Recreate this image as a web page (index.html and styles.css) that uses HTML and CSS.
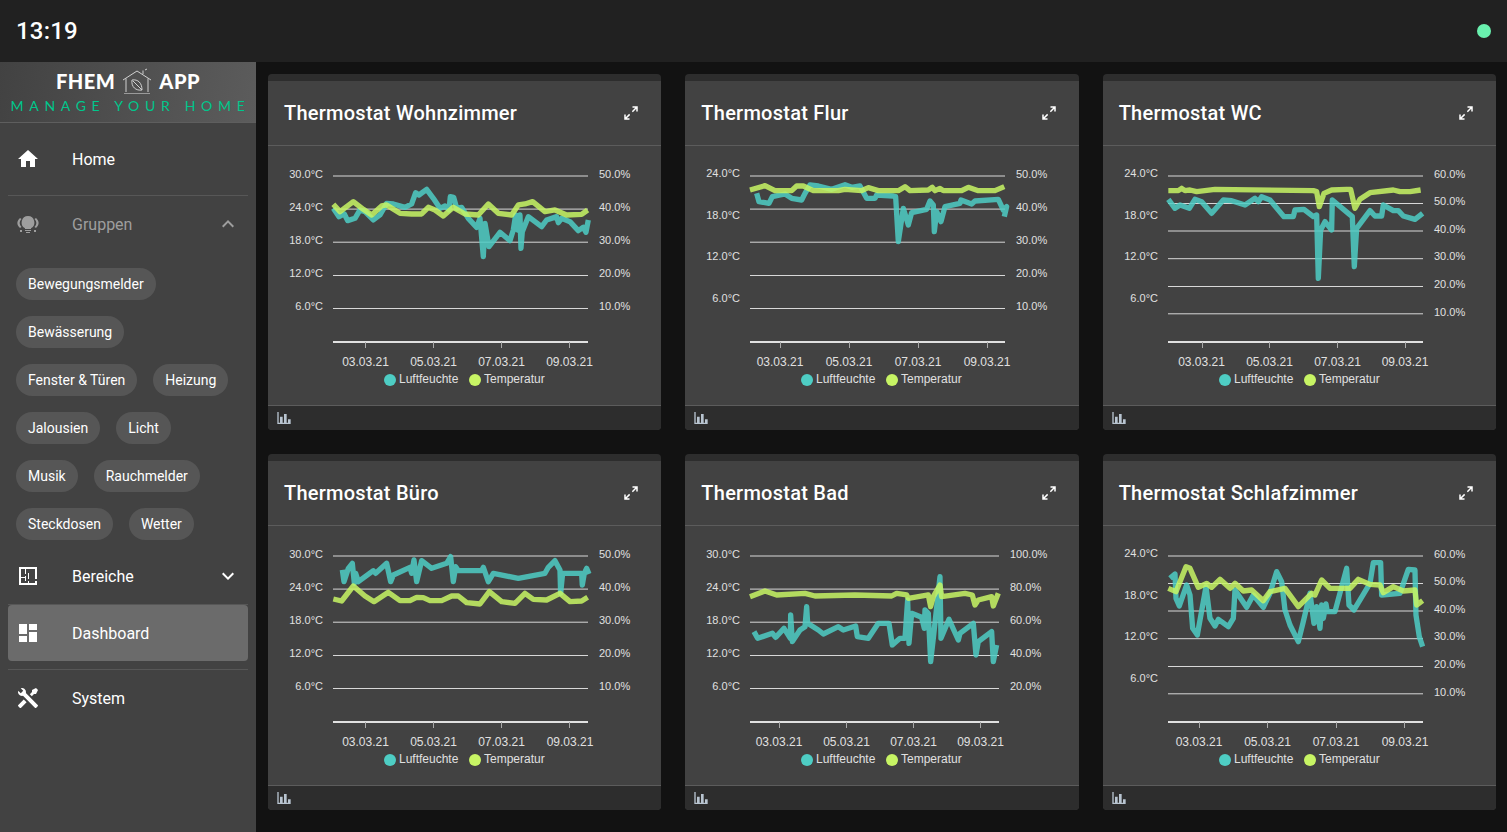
FILE: index.html
```html
<!DOCTYPE html>
<html lang="en">
<head>
    <meta charset="UTF-8">
    <meta name="viewport" content="width=device-width, initial-scale=1.0">
    <title>FHEM App</title>
    <link rel="stylesheet" href="styles.css">
</head>
<body>
    <header class="topbar">
        <span class="clock">13:19</span>
        <span class="status-dot"></span>
    </header>
    <div class="layout">
        <aside class="sidebar">
            <div class="logo">
                <div class="logo-name">
                    <span>FHEM</span>
                    <svg class="logo-house" viewBox="0 0 30 27">
                        <path d="M1 12 L15 3 L29 12 M4 10.5 V24 M26 10.5 V24 M21 6 V2.5 M23 2 L25 1"/>
                        <path d="M2 25.5 H28" class="logo-floor"/>
                        <path d="M10 12 C16 11 20 15 20 22 C14 23 9 19 10 12 Z M11 13 L20 22"/>
                    </svg>
                    <span>APP</span>
                </div>
                <div class="logo-claim">MANAGE YOUR HOME</div>
            </div>
            <nav>
                <a class="nav-item nav-home">
                    <svg class="icon" viewBox="0 0 24 24"><path d="M10,20V14H14V20H19V12H22L12,3L2,12H5V20H10Z"/></svg>
                    <span>Home</span>
                </a>
                <hr class="divider">
                <a class="nav-item nav-muted">
                    <svg class="icon" viewBox="0 0 24 24"><path d="M12 4A6.500 6.500 0 0 0 9 16.200V17H15V16.200A6.500 6.500 0 0 0 12 4ZM9 18H15V19H9ZM10 20H14V21H10ZM4 6C.5 9 .5 13 4 16L5.500 15C3 12.500 3 9.500 5.500 7ZM20 6L18.500 7C21 9.500 21 12.500 18.500 15L20 16C23.500 13 23.500 9 20 6ZM4 18H6V20H4ZM18 18H20V20H18Z"/></svg>
                    <span>Gruppen</span>
                    <svg class="icon chevron" viewBox="0 0 24 24"><path d="M7.41,15.41L12,10.83L16.59,15.41L18,14L12,8L6,14L7.41,15.41Z"/></svg>
                </a>
                <div class="chips">
                    <div class="chip-row"><span class="chip">Bewegungsmelder</span></div>
                    <div class="chip-row"><span class="chip">Bewässerung</span></div>
                    <div class="chip-row"><span class="chip">Fenster &amp; Türen</span><span class="chip">Heizung</span></div>
                    <div class="chip-row"><span class="chip">Jalousien</span><span class="chip">Licht</span></div>
                    <div class="chip-row"><span class="chip">Musik</span><span class="chip">Rauchmelder</span></div>
                    <div class="chip-row"><span class="chip">Steckdosen</span><span class="chip">Wetter</span></div>
                </div>
                <a class="nav-item">
                    <svg class="icon" viewBox="0 0 24 24"><path d="M10,5V10H9V5H5V13H9V12H10V17H9V14H5V19H12V17H13V19H19V17H21V21H3V3H21V15H19V10H13V15H12V9H13V10H19V5H10Z"/></svg>
                    <span>Bereiche</span>
                    <svg class="icon chevron" viewBox="0 0 24 24"><path d="M7.41,8.58L12,13.17L16.59,8.58L18,10L12,16L6,10L7.41,8.58Z"/></svg>
                </a>
                <hr class="divider">
                <a class="nav-item nav-active">
                    <svg class="icon" viewBox="0 0 24 24"><path d="M13,3V9H21V3M13,21H21V11H13M3,21H11V15H3M3,13H11V3H3V13Z"/></svg>
                    <span>Dashboard</span>
                </a>
                <hr class="divider divider-gap">
                <a class="nav-item">
                    <svg class="icon" viewBox="0 0 24 24"><path d="M21.71 20.29L20.29 21.71A1 1 0 0 1 18.88 21.71L7 9.85A3.81 3.81 0 0 1 6 10A4 4 0 0 1 2.22 4.7L4.76 7.24L5.29 6.71L6.71 5.29L7.24 4.76L4.7 2.22A4 4 0 0 1 10 6A3.81 3.81 0 0 1 9.85 7L21.71 18.88A1 1 0 0 1 21.71 20.29M2.29 18.88A1 1 0 0 0 2.29 20.29L3.71 21.71A1 1 0 0 0 5.12 21.71L10.59 16.25L7.76 13.42M20 2L16 4V6L13.83 8.17L15.83 10.17L18 8H20L22 4Z"/></svg>
                    <span>System</span>
                </a>
            </nav>
        </aside>

        <main class="cards">
            <!-- Wohnzimmer -->
            <section class="card">
                <div class="card-head">
                    <h2>Thermostat Wohnzimmer</h2>
                    <svg class="expand" viewBox="0 0 24 24"><path d="M10,21V19H6.41L10.91,14.5L9.5,13.09L5,17.59V14H3V21H10M14.5,10.91L19,6.41V10H21V3H14V5H17.59L13.09,9.5L14.5,10.91Z"/></svg>
                </div>
                <svg class="chart" viewBox="0 0 394 259">
                    <g class="grid">
                        <path d="M65 30H320"/><path d="M65 63.100H320"/><path d="M65 96.200H320"/><path d="M65 129.500H320"/><path d="M65 162.500H320"/>
                    </g>
                    <path class="axis" d="M65 196H320"/>
                    <path class="ticks" d="M97.500 196V202M165.500 196V202M233.500 196V202M301.500 196V202"/>
                    <g class="labels">
                        <text x="55" y="32" text-anchor="end">30.0°C</text><text x="55" y="65" text-anchor="end">24.0°C</text><text x="55" y="98" text-anchor="end">18.0°C</text><text x="55" y="131" text-anchor="end">12.0°C</text><text x="55" y="164" text-anchor="end">6.0°C</text>
                        <text x="331" y="32">50.0%</text><text x="331" y="65">40.0%</text><text x="331" y="98">30.0%</text><text x="331" y="131">20.0%</text><text x="331" y="164">10.0%</text>
                    </g>
                    <g class="labels-x">
                        <text x="97.500" y="220">03.03.21</text><text x="165.500" y="220">05.03.21</text><text x="233.500" y="220">07.03.21</text><text x="301.500" y="220">09.03.21</text>
                    </g>
                    <g class="legend">
                        <circle class="dot-teal" cx="122" cy="234" r="6"/><text x="131" y="237">Luftfeuchte</text>
                        <circle class="dot-lime" cx="207" cy="234" r="6"/><text x="216" y="237">Temperatur</text>
                    </g>
                    <g transform="translate(-3 -76) scale(.3333)">
                        <polyline class="teal" points="205,415 222,440 238,432 248,452 270,445 285,420 300,425 325,450 345,435 365,400 385,402 420,412 440,402 452,368 462,375 485,358 505,385 525,415 540,408 552,420 556,380 566,382 575,415 590,412 610,445 635,472 645,445 655,560 660,460 672,530 705,487 735,512 745,480 752,435 758,480 765,435 768,535 772,485 790,440 830,470 845,450 875,440 880,458 890,445 915,455 940,482 955,472 963,487 970,450"/>
                        <polyline class="lime" points="205,403 225,425 265,395 295,418 320,435 350,408 365,405 405,430 440,432 470,432 490,412 510,420 535,438 565,412 600,432 640,435 670,402 700,430 740,435 760,405 780,402 803,395 840,425 870,420 905,435 950,433 968,420"/>
                    </g>
                </svg>
                <div class="card-foot"><svg class="foot-icon" viewBox="0 0 24 24"><path d="M22,21H2V3H4V19H6V10H10V19H12V6H16V19H18V14H22V21Z"/></svg></div>
            </section>

            <!-- Flur -->
            <section class="card">
                <div class="card-head">
                    <h2>Thermostat Flur</h2>
                    <svg class="expand" viewBox="0 0 24 24"><path d="M10,21V19H6.41L10.91,14.5L9.5,13.09L5,17.59V14H3V21H10M14.5,10.91L19,6.41V10H21V3H14V5H17.59L13.09,9.5L14.5,10.91Z"/></svg>
                </div>
                <svg class="chart" viewBox="0 0 394 259">
                    <g class="grid">
                        <path d="M65 30H320"/><path d="M65 63.100H320"/><path d="M65 96.200H320"/><path d="M65 129.500H320"/><path d="M65 162.500H320"/>
                    </g>
                    <path class="axis" d="M65 196H320"/>
                    <path class="ticks" d="M95.500 196V202M164.500 196V202M233.500 196V202M302.500 196V202"/>
                    <g class="labels">
                        <text x="55" y="31" text-anchor="end">24.0°C</text><text x="55" y="73" text-anchor="end">18.0°C</text><text x="55" y="114" text-anchor="end">12.0°C</text><text x="55" y="156" text-anchor="end">6.0°C</text>
                        <text x="331" y="32">50.0%</text><text x="331" y="65">40.0%</text><text x="331" y="98">30.0%</text><text x="331" y="131">20.0%</text><text x="331" y="164">10.0%</text>
                    </g>
                    <g class="labels-x">
                        <text x="95" y="220">03.03.21</text><text x="164" y="220">05.03.21</text><text x="233" y="220">07.03.21</text><text x="302" y="220">09.03.21</text>
                    </g>
                    <g class="legend">
                        <circle class="dot-teal" cx="122" cy="234" r="6"/><text x="131" y="237">Luftfeuchte</text>
                        <circle class="dot-lime" cx="207" cy="234" r="6"/><text x="216" y="237">Temperatur</text>
                    </g>
                    <g transform="translate(0 4) scale(.3333)">
                        <polyline class="teal" points="215,130 222,155 240,158 252,160 262,140 300,132 320,145 350,150 360,130 375,105 400,108 440,118 480,104 500,112 525,108 545,145 570,145 575,135 625,138 632,140 640,275 655,175 670,225 680,188 725,178 735,153 745,165 748,245 755,185 768,215 780,170 825,160 828,150 860,162 870,153 940,148 955,180 965,170 958,200"/>
                        <polyline class="lime" points="195,120 240,107 270,122 320,122 335,108 355,108 385,122 460,122 480,118 530,122 550,113 580,122 640,122 660,110 675,122 730,120 742,112 750,122 765,115 775,122 830,122 850,112 880,122 930,122 958,110"/>
                    </g>
                </svg>
                <div class="card-foot"><svg class="foot-icon" viewBox="0 0 24 24"><path d="M22,21H2V3H4V19H6V10H10V19H12V6H16V19H18V14H22V21Z"/></svg></div>
            </section>

            <!-- WC -->
            <section class="card">
                <div class="card-head">
                    <h2>Thermostat WC</h2>
                    <svg class="expand" viewBox="0 0 24 24"><path d="M10,21V19H6.41L10.91,14.5L9.5,13.09L5,17.59V14H3V21H10M14.5,10.91L19,6.41V10H21V3H14V5H17.59L13.09,9.5L14.5,10.91Z"/></svg>
                </div>
                <svg class="chart" viewBox="0 0 394 259">
                    <g class="grid">
                        <path d="M65 30H320"/><path d="M65 57.500H320"/><path d="M65 85H320"/><path d="M65 112.700H320"/><path d="M65 140.500H320"/><path d="M65 167.800H320"/>
                    </g>
                    <path class="axis" d="M65 196H320"/>
                    <path class="ticks" d="M99.500 196V202M166.500 196V202M234.500 196V202M302.500 196V202"/>
                    <g class="labels">
                        <text x="55" y="31" text-anchor="end">24.0°C</text><text x="55" y="73" text-anchor="end">18.0°C</text><text x="55" y="114" text-anchor="end">12.0°C</text><text x="55" y="156" text-anchor="end">6.0°C</text>
                        <text x="331" y="32">60.0%</text><text x="331" y="59">50.0%</text><text x="331" y="87">40.0%</text><text x="331" y="114">30.0%</text><text x="331" y="142">20.0%</text><text x="331" y="170">10.0%</text>
                    </g>
                    <g class="labels-x">
                        <text x="98.500" y="220">03.03.21</text><text x="166.500" y="220">05.03.21</text><text x="234.500" y="220">07.03.21</text><text x="302" y="220">09.03.21</text>
                    </g>
                    <g class="legend">
                        <circle class="dot-teal" cx="122" cy="234" r="6"/><text x="131" y="237">Luftfeuchte</text>
                        <circle class="dot-lime" cx="207" cy="234" r="6"/><text x="216" y="237">Temperatur</text>
                    </g>
                    <g transform="translate(-3 4) scale(.3333)">
                        <polyline class="teal" points="205,148 225,175 240,165 268,175 285,148 305,155 335,190 370,150 395,152 435,165 465,145 475,155 485,140 510,150 552,200 580,200 585,180 612,178 640,200 650,195 655,385 662,240 675,215 695,240 697,150 745,190 757,200 763,350 770,235 810,182 825,198 845,198 850,165 880,182 895,182 910,198 945,208 968,190"/>
                        <polyline class="lime" points="205,122 235,122 245,115 255,122 270,120 290,125 345,118 640,122 650,125 658,170 672,130 695,120 740,118 752,118 765,175 780,148 810,128 880,120 900,125 930,125 962,120"/>
                    </g>
                </svg>
                <div class="card-foot"><svg class="foot-icon" viewBox="0 0 24 24"><path d="M22,21H2V3H4V19H6V10H10V19H12V6H16V19H18V14H22V21Z"/></svg></div>
            </section>

            <!-- Büro -->
            <section class="card">
                <div class="card-head">
                    <h2>Thermostat Büro</h2>
                    <svg class="expand" viewBox="0 0 24 24"><path d="M10,21V19H6.41L10.91,14.5L9.5,13.09L5,17.59V14H3V21H10M14.5,10.91L19,6.41V10H21V3H14V5H17.59L13.09,9.5L14.5,10.91Z"/></svg>
                </div>
                <svg class="chart" viewBox="0 0 394 259">
                    <g class="grid">
                        <path d="M65 30H320"/><path d="M65 63.100H320"/><path d="M65 96.200H320"/><path d="M65 129.500H320"/><path d="M65 162.500H320"/>
                    </g>
                    <path class="axis" d="M65 196H320"/>
                    <path class="ticks" d="M97.500 196V202M165.500 196V202M233.500 196V202M301.500 196V202"/>
                    <g class="labels">
                        <text x="55" y="32" text-anchor="end">30.0°C</text><text x="55" y="65" text-anchor="end">24.0°C</text><text x="55" y="98" text-anchor="end">18.0°C</text><text x="55" y="131" text-anchor="end">12.0°C</text><text x="55" y="164" text-anchor="end">6.0°C</text>
                        <text x="331" y="32">50.0%</text><text x="331" y="65">40.0%</text><text x="331" y="98">30.0%</text><text x="331" y="131">20.0%</text><text x="331" y="164">10.0%</text>
                    </g>
                    <g class="labels-x">
                        <text x="97.500" y="220">03.03.21</text><text x="165.500" y="220">05.03.21</text><text x="233.500" y="220">07.03.21</text><text x="302" y="220">09.03.21</text>
                    </g>
                    <g class="legend">
                        <circle class="dot-teal" cx="122" cy="234" r="6"/><text x="131" y="237">Luftfeuchte</text>
                        <circle class="dot-lime" cx="207" cy="234" r="6"/><text x="216" y="237">Temperatur</text>
                    </g>
                    <g transform="translate(-3 4) scale(.3333)">
                        <polyline class="teal" points="232,120 237,155 250,115 262,100 268,160 272,130 280,155 325,122 332,130 365,100 377,155 385,135 435,112 440,130 447,90 455,155 470,92 500,115 545,100 557,80 565,155 572,110 580,122 650,122 655,112 670,155 685,130 760,145 840,130 850,112 870,92 885,120 887,190 893,130 950,130 952,165 958,130 965,115 972,132"/>
                        <polyline class="lime" points="205,207 230,213 265,168 300,198 327,215 370,187 405,212 435,212 455,202 475,203 495,212 530,212 560,198 580,198 605,218 645,222 673,185 710,215 750,220 780,190 805,208 845,210 885,190 915,215 950,213 968,202"/>
                    </g>
                </svg>
                <div class="card-foot"><svg class="foot-icon" viewBox="0 0 24 24"><path d="M22,21H2V3H4V19H6V10H10V19H12V6H16V19H18V14H22V21Z"/></svg></div>
            </section>

            <!-- Bad -->
            <section class="card">
                <div class="card-head">
                    <h2>Thermostat Bad</h2>
                    <svg class="expand" viewBox="0 0 24 24"><path d="M10,21V19H6.41L10.91,14.5L9.5,13.09L5,17.59V14H3V21H10M14.5,10.91L19,6.41V10H21V3H14V5H17.59L13.09,9.5L14.5,10.91Z"/></svg>
                </div>
                <svg class="chart" viewBox="0 0 394 259">
                    <g class="grid">
                        <path d="M65 30H314"/><path d="M65 63.100H314"/><path d="M65 96.200H314"/><path d="M65 129.500H314"/><path d="M65 162.500H314"/>
                    </g>
                    <path class="axis" d="M65 196H314"/>
                    <path class="ticks" d="M94.500 196V202M161.500 196V202M228.500 196V202M295.500 196V202"/>
                    <g class="labels">
                        <text x="55" y="32" text-anchor="end">30.0°C</text><text x="55" y="65" text-anchor="end">24.0°C</text><text x="55" y="98" text-anchor="end">18.0°C</text><text x="55" y="131" text-anchor="end">12.0°C</text><text x="55" y="164" text-anchor="end">6.0°C</text>
                        <text x="325" y="32">100.0%</text><text x="325" y="65">80.0%</text><text x="325" y="98">60.0%</text><text x="325" y="131">40.0%</text><text x="325" y="164">20.0%</text>
                    </g>
                    <g class="labels-x">
                        <text x="94" y="220">03.03.21</text><text x="161.500" y="220">05.03.21</text><text x="228.500" y="220">07.03.21</text><text x="295.500" y="220">09.03.21</text>
                    </g>
                    <g class="legend">
                        <circle class="dot-teal" cx="122" cy="234" r="6"/><text x="131" y="237">Luftfeuchte</text>
                        <circle class="dot-lime" cx="207" cy="234" r="6"/><text x="216" y="237">Temperatur</text>
                    </g>
                    <g transform="translate(0 4) scale(.3333)">
                        <polyline class="teal" points="207,305 218,325 262,310 272,322 297,295 316,325 317,255 322,335 345,300 360,290 365,230 368,280 400,300 415,312 460,290 475,300 512,288 517,320 550,325 580,280 612,280 622,345 645,325 660,325 668,210 672,340 680,250 710,262 718,295 720,240 730,250 737,395 745,325 765,140 768,325 792,268 820,330 825,310 865,280 873,375 880,335 920,305 925,395 935,345"/>
                        <polyline class="lime" points="195,200 240,183 275,195 360,190 390,198 510,195 620,198 635,190 665,195 670,205 730,195 737,230 745,200 765,165 770,200 840,190 862,195 870,225 880,210 920,200 925,228 940,190"/>
                    </g>
                </svg>
                <div class="card-foot"><svg class="foot-icon" viewBox="0 0 24 24"><path d="M22,21H2V3H4V19H6V10H10V19H12V6H16V19H18V14H22V21Z"/></svg></div>
            </section>

            <!-- Schlafzimmer -->
            <section class="card">
                <div class="card-head">
                    <h2>Thermostat Schlafzimmer</h2>
                    <svg class="expand" viewBox="0 0 24 24"><path d="M10,21V19H6.41L10.91,14.5L9.5,13.09L5,17.59V14H3V21H10M14.5,10.91L19,6.41V10H21V3H14V5H17.59L13.09,9.5L14.5,10.91Z"/></svg>
                </div>
                <svg class="chart" viewBox="0 0 394 259">
                    <g class="grid">
                        <path d="M65 30H320"/><path d="M65 57.500H320"/><path d="M65 85H320"/><path d="M65 112.700H320"/><path d="M65 140.500H320"/><path d="M65 167.800H320"/>
                    </g>
                    <path class="axis" d="M65 196H320"/>
                    <path class="ticks" d="M96.500 196V202M164.500 196V202M233.500 196V202M301.500 196V202"/>
                    <g class="labels">
                        <text x="55" y="31" text-anchor="end">24.0°C</text><text x="55" y="73" text-anchor="end">18.0°C</text><text x="55" y="114" text-anchor="end">12.0°C</text><text x="55" y="156" text-anchor="end">6.0°C</text>
                        <text x="331" y="32">60.0%</text><text x="331" y="59">50.0%</text><text x="331" y="87">40.0%</text><text x="331" y="114">30.0%</text><text x="331" y="142">20.0%</text><text x="331" y="170">10.0%</text>
                    </g>
                    <g class="labels-x">
                        <text x="96" y="220">03.03.21</text><text x="164.500" y="220">05.03.21</text><text x="233" y="220">07.03.21</text><text x="302" y="220">09.03.21</text>
                    </g>
                    <g class="legend">
                        <circle class="dot-teal" cx="122" cy="234" r="6"/><text x="131" y="237">Luftfeuchte</text>
                        <circle class="dot-lime" cx="207" cy="234" r="6"/><text x="216" y="237">Temperatur</text>
                    </g>
                    <g transform="translate(-3 4) scale(.3333)">
                        <polyline class="teal" points="210,145 225,132 228,205 238,228 260,165 270,195 278,295 292,315 318,170 330,265 345,288 355,268 385,290 400,265 405,180 440,232 460,195 490,232 510,190 530,125 545,155 555,240 570,285 595,335 610,275 630,190 642,280 650,230 660,295 665,225 670,265 678,222 682,245 705,245 740,115 747,225 762,240 810,160 820,98 842,98 845,195 900,190 925,118 945,120 948,255 958,320 968,350"/>
                        <polyline class="lime" points="205,175 228,185 258,110 270,115 295,172 320,160 335,172 360,148 390,175 405,160 430,183 455,180 490,212 510,185 555,175 595,230 635,190 645,195 665,150 690,175 750,175 775,148 810,163 840,165 850,188 880,170 910,183 945,180 950,225 968,212"/>
                    </g>
                </svg>
                <div class="card-foot"><svg class="foot-icon" viewBox="0 0 24 24"><path d="M22,21H2V3H4V19H6V10H10V19H12V6H16V19H18V14H22V21Z"/></svg></div>
            </section>
        </main>
    </div>
</body>
</html>
```

FILE: styles.css
```css
* {
    box-sizing: border-box;
}
html, body {
    height: 100%;
}
body {
    margin: 0;
    background-color: #121212;
    color: #fff;
    font-family: Roboto, sans-serif;
    overflow: hidden;
}

/* top bar */
.topbar {
    height: 62px;
    padding: 0 16px;
    display: flex;
    align-items: center;
    justify-content: space-between;
    background-color: #212121;
}
.clock {
    font-size: 24px;
    font-weight: 500;
    line-height: 1;
    letter-spacing: .2px;
}
.status-dot {
    width: 14px;
    height: 14px;
    border-radius: 50%;
    background-color: #69f0ae;
}

.layout {
    display: flex;
    height: 770px;
}

/* sidebar */
.sidebar {
    width: 256px;
    flex: none;
    background-color: #424242;
}
.logo {
    height: 61px;
    padding-top: 6px;
    background: linear-gradient(100deg, #424242, #5c5c5c);
    border-bottom: 1px solid #5e5e5e;
    text-align: center;
}
.logo-name {
    display: flex;
    justify-content: center;
    align-items: center;
    gap: 7px;
    height: 26px;
    font-family: Lato, sans-serif;
    font-size: 20px;
    font-weight: 900;
    letter-spacing: .5px;
}
.logo-house {
    width: 30px;
    height: 27px;
    fill: none;
    stroke: #d0d0d0;
    stroke-width: 1;
}
.logo-floor {
    stroke: #9a9a9a;
}
.logo-claim {
    margin-top: 3px;
    padding-left: 5px;
    font-family: Lato, sans-serif;
    font-size: 14px;
    letter-spacing: 5.7px;
    white-space: nowrap;
    color: #00c78c;
}
.nav-item {
    display: flex;
    align-items: center;
    height: 56px;
    margin: 0 8px;
    padding: 0 10px;
    border-radius: 4px;
    font-size: 16px;
}
.nav-item .icon {
    width: 24px;
    height: 24px;
    margin-left: -2px;
    margin-right: 32px;
    fill: #fff;
    flex: none;
}
.nav-item .chevron {
    margin: 0 -2px 0 auto;
    width: 24px;
}
.nav-home {
    height: 72px;
}
.nav-muted {
    color: #9e9e9e;
}
.nav-muted .icon {
    fill: #9e9e9e;
}
.nav-active {
    background-color: #6b6b6b;
}
.divider {
    height: 1px;
    margin: 0 8px;
    border: 0;
    background-color: #575757;
}
.divider-gap {
    margin-top: 8px;
}
.chips {
    display: flex;
    flex-direction: column;
    gap: 16px;
    padding: 16px 16px 8px;
}
.chip-row {
    display: flex;
    gap: 16px;
}
.chip {
    height: 32px;
    padding: 0 12px;
    display: flex;
    align-items: center;
    border-radius: 16px;
    background-color: #565656;
    font-size: 14px;
    color: #fff;
}

/* cards */
.cards {
    flex: 1;
    display: grid;
    grid-template-columns: repeat(3, 1fr);
    grid-template-rows: 356px 356px;
    gap: 24px;
    padding: 12px 11px 0 12px;
}
.card {
    display: flex;
    flex-direction: column;
    border-radius: 4px;
    overflow: hidden;
    background-color: #424242;
    border-top: 7px solid #2d2d2d;
}
.card-head {
    height: 65px;
    flex: none;
    padding: 0 21px 0 16px;
    display: flex;
    align-items: center;
    justify-content: space-between;
    border-bottom: 1px solid #5c5c5c;
}
.card-head h2 {
    margin: 0;
    font-size: 20px;
    font-weight: 500;
    letter-spacing: .25px;
}
.expand {
    width: 18px;
    height: 18px;
    fill: #fff;
}
.chart {
    display: block;
    flex: none;
    width: 394px;
    height: 259px;
}
.grid path {
    stroke: #d8d8d8;
    stroke-width: 1;
}
.axis {
    stroke: #e0e0e0;
    stroke-width: 2;
}
.ticks {
    stroke: #a8a8a8;
    stroke-width: 1;
}
.labels text {
    font: 11px "Liberation Sans", sans-serif;
    fill: #e0e0e0;
}
.labels-x text {
    font: 12px "Liberation Sans", sans-serif;
    fill: #e0e0e0;
    text-anchor: middle;
}
.legend text {
    font: 12px "Liberation Sans", sans-serif;
    fill: #e0e0e0;
}
.dot-teal {
    fill: #4ecdc4;
}
.dot-lime {
    fill: #c7f464;
}
.teal, .lime {
    fill: none;
    stroke-width: 16;
    stroke-linejoin: round;
    opacity: .85;
}
.teal {
    stroke: #4ecdc4;
}
.lime {
    stroke: #c7f464;
}
.card-foot {
    flex: 1;
    padding: 4px 8px;
    display: flex;
    align-items: center;
    background-color: #2d2d2d;
    border-top: 1px solid #5c5c5c;
}
.foot-icon {
    width: 16px;
    height: 16px;
    fill: #b8c4d0;
}
```
